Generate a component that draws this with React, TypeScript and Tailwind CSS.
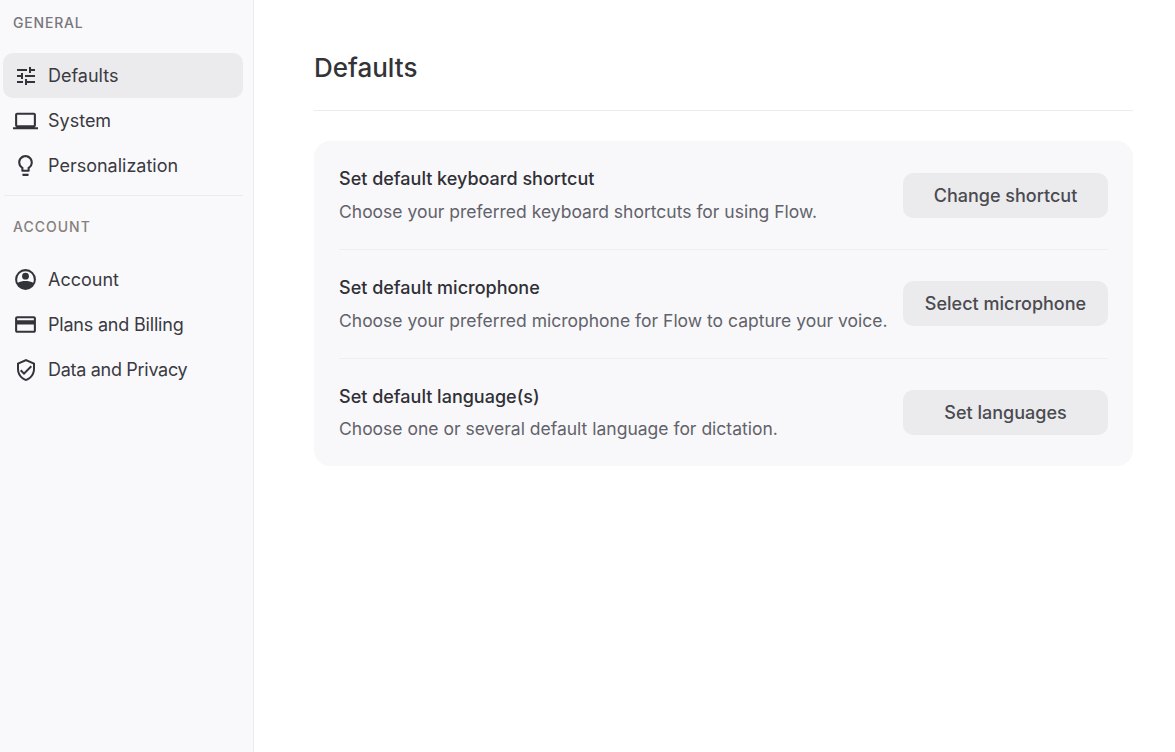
import React from "react";
import {
  MdOutlineTune,
  MdOutlineLaptop,
  MdOutlineLightbulb,
  MdOutlineCreditCard,
  MdOutlineVerifiedUser,
} from "react-icons/md";

const AccountIcon = () => (
  <svg viewBox="0 0 24 24" className="w-[25px] h-[25px]" fill="currentColor">
    <path d="M12 2a10 10 0 1 0 0 20 10 10 0 0 0 0-20zm0 2a8 8 0 0 1 8 8c0 1.100-.22 2.150-.62 3.100C17.500 14 14.800 13.500 12 13.500s-5.500.5-7.380 1.600A7.960 7.960 0 0 1 4 12a8 8 0 0 1 8-8z" />
    <circle cx="12" cy="8.800" r="3.300" />
  </svg>
);

const NavItem: React.FC<{
  icon: React.ReactNode;
  label: string;
  active?: boolean;
  labelClass?: string;
}> = ({ icon, label, active, labelClass = "" }) => (
  <div
    className={`flex items-center h-[45px] rounded-[10px] pl-[10px] gap-[10px] text-[18px] text-[#3a3a42] ${
      active ? "bg-[#ebeaec]" : ""
    }`}
  >
    <span className="w-[25px] flex justify-center text-[#33333a]">{icon}</span>
    <span className={labelClass}>{label}</span>
  </div>
);

const Row: React.FC<{
  title: string;
  text: string;
  button: string;
  last?: boolean;
  raised?: boolean;
}> = ({ title, text, button, last, raised }) => (
  <div
    className={`flex items-center justify-between ${
      last ? "h-[107px]" : "h-[109px] border-b border-[#efeff1]"
    }`}
  >
    <div>
      <div
        className={`text-[18px] font-medium text-[#303036] leading-[24px] ${
          last ? "mb-[8px]" : "mb-[9px]"
        }`}
      >
        {title}
      </div>
      <div className="text-[17.500px] text-[#62626a] leading-[24px]">{text}</div>
    </div>
    <button
      className={`w-[205px] h-[45px] rounded-[10px] bg-[#ebeaec] text-[18px] font-medium text-[#4a4a51] ${
        raised ? "mb-[1px]" : ""
      }`}
    >
      {button}
    </button>
  </div>
);

export default function App() {
  return (
    <div
      className="flex h-screen bg-white"
      style={{ fontFamily: '"Inter", "Noto Sans", sans-serif' }}
    >
      <aside className="w-[254px] shrink-0 bg-[#f9f9fb] border-r border-[#ececee] pl-[3px] pr-[10px]">
        <div className="pl-[10px] pt-[13px] h-[53px] text-[14px] tracking-[0.8px] text-[#77777d] font-medium leading-[20px]">
          GENERAL
        </div>
        <NavItem active icon={<MdOutlineTune size={24} />} label="Defaults" />
        <NavItem icon={<MdOutlineLaptop size={26} />} label="System" />
        <NavItem icon={<MdOutlineLightbulb size={25} />} label="Personalization" />
        <div className="border-t border-[#ececee] mt-[7px] ml-[1px]" />
        <div className="pl-[10px] pt-[21px] h-[61px] text-[14px] tracking-[1px] text-[#85807d] font-medium leading-[20px]">
          ACCOUNT
        </div>
        <NavItem icon={<AccountIcon />} label="Account" />
        <NavItem
          icon={<MdOutlineCreditCard size={25} />}
          label="Plans and Billing"
          labelClass="tracking-[-0.2px]"
        />
        <NavItem
          icon={<MdOutlineVerifiedUser size={24} />}
          label="Data and Privacy"
          labelClass="tracking-[-0.3px]"
        />
      </aside>
      <main className="flex-1 pl-[60px] pr-[42px]">
        <h1 className="h-[111px] pt-[50px] border-b border-[#ececee] text-[26px] font-medium text-[#333338] leading-[36px]">
          Defaults
        </h1>
        <div className="mt-[30px] rounded-[16px] bg-[#f8f8fa] px-[25px]">
          <Row
            title="Set default keyboard shortcut"
            text="Choose your preferred keyboard shortcuts for using Flow."
            button="Change shortcut"
          />
          <Row
            raised
            title="Set default microphone"
            text="Choose your preferred microphone for Flow to capture your voice."
            button="Select microphone"
          />
          <Row
            last
            title="Set default language(s)"
            text="Choose one or several default language for dictation."
            button="Set languages"
          />
        </div>
      </main>
    </div>
  );
}
